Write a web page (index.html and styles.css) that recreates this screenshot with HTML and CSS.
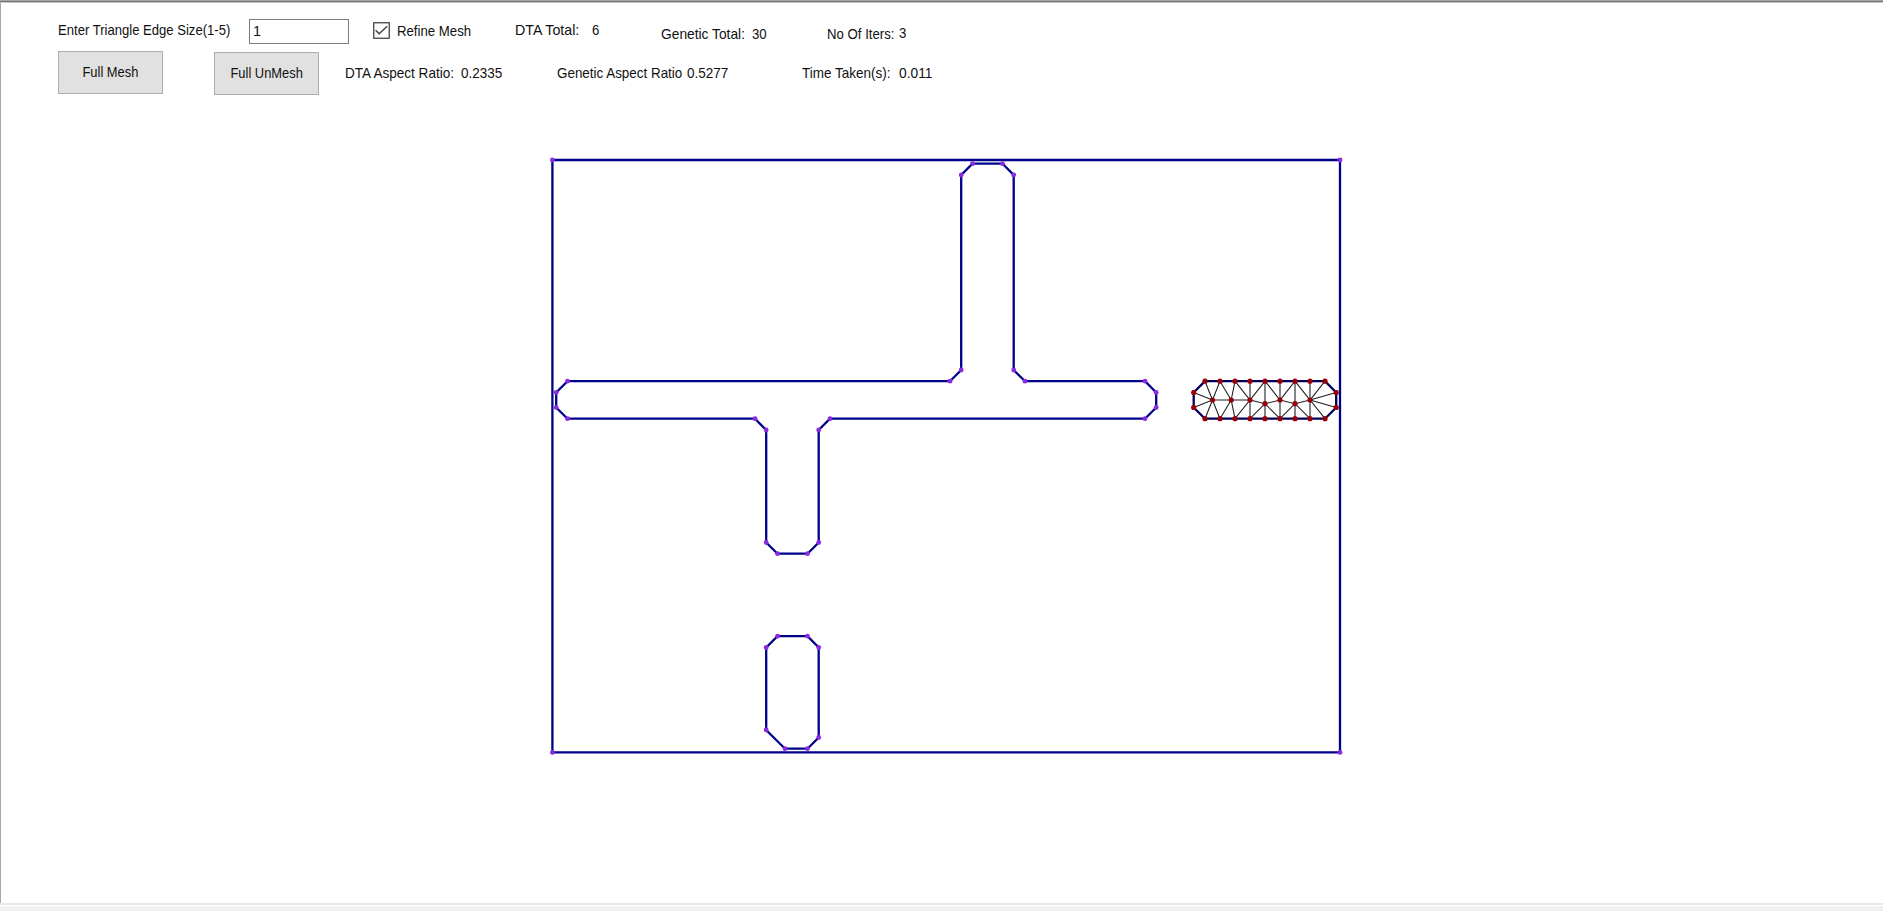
FILE: index.html
```html
<!DOCTYPE html>
<html lang="en">
<head>
<meta charset="utf-8">
<title>Mesh</title>
<link rel="stylesheet" href="styles.css">
</head>
<body>
<main class="panel">
  <form class="row row-top">
    <label class="text edge-label" for="edge"><span>Enter Triangle Edge Size(1-5)</span></label>
    <input class="edge-input" id="edge" type="text" value="1">
    <svg class="check" width="17" height="17" viewBox="0 0 17 17"><rect x=".75" y=".75" width="15.5" height="15.5" fill="#fff" stroke="#444" stroke-width="1.3"/><path d="M2.6 8.2 6.2 11.8 14.2 4.2" fill="none" stroke="#444" stroke-width="1.5"/></svg>
    <span class="text refine"><span>Refine Mesh</span></span>
    <span class="text dta-total"><span>DTA Total:</span></span>
    <span class="text dta-total-value"><span>6</span></span>
    <span class="text genetic-total"><span>Genetic Total:</span></span>
    <span class="text genetic-total-value"><span>30</span></span>
    <span class="text iters"><span>No Of Iters:</span></span>
    <span class="text iters-value"><span>3</span></span>
  </form>
  <div class="row row-bottom">
    <button class="button mesh" type="button"><span>Full Mesh</span></button>
    <button class="button unmesh" type="button"><span>Full UnMesh</span></button>
    <span class="text dta-ratio"><span>DTA Aspect Ratio:</span></span>
    <span class="text dta-ratio-value"><span>0.2335</span></span>
    <span class="text genetic-ratio"><span>Genetic Aspect Ratio</span></span>
    <span class="text genetic-ratio-value"><span>0.5277</span></span>
    <span class="text time"><span>Time Taken(s):</span></span>
    <span class="text time-value"><span>0.011</span></span>
  </div>
  <svg class="drawing" width="800" height="605" viewBox="546 154 800 605">
    <defs>
      <marker id="node" viewBox="-3 -3 6 6" markerWidth="6" markerHeight="6" markerUnits="userSpaceOnUse"><circle r="2.4" fill="#8a2be2"/></marker>
      <marker id="mesh-node" viewBox="-3 -3 6 6" markerWidth="6" markerHeight="6" markerUnits="userSpaceOnUse"><circle r="2.6" fill="#960008"/></marker>
    </defs>
    <g class="outline">
      <path d="M552.4 160H1340V752.4H552.4Z"/>
      <path d="M567.5 381.2 556.2 392.5V407.5L567.5 418.7H755L766.2 430V542.5L777.5 553.7H807.5L818.7 542.5V430L830 418.7H1145L1156.2 407.5V392.5L1145 381.2H1025L1013.7 370V175L1002.5 163.7H972.5L961.2 175V370L950 381.2Z"/>
      <path d="M777.5 636.2H807.5L818.7 647.5V737.5L807.5 748.7H785L766.2 730V647.5Z"/>
    </g>
    <path class="mesh-lines" d="M1193.7 392.5 1212.5 400 1193.7 407.5M1205 381.2 1212.5 400 1220 381.2M1205 418.7 1212.5 400 1220 418.7M1212.5 400H1250M1220 381.2 1231.2 400 1235 381.2M1220 418.7 1231.2 400 1235 418.7M1235 381.2 1250 400 1265 381.2M1235 418.7 1250 400M1250 381.2V418.7M1250 400 1265 403.7 1280 400 1295 403.7 1310 400M1265 381.2V418.7M1250 418.7 1265 403.7 1280 418.7M1265 381.2 1280 400 1295 381.2M1280 381.2V418.7M1295 381.2V418.7M1280 418.7 1295 403.7 1310 418.7M1295 381.2 1310 400 1325 381.2M1310 381.2V418.7M1336.2 392.5 1310 400 1336.2 407.5M1310 400 1325 418.7"/>
    <path class="mesh-border" d="M1205 381.2H1220 1235 1250 1265 1280 1295 1310 1325L1336.2 392.5V407.5L1325 418.7H1310 1295 1280 1265 1250 1235 1220 1205L1193.7 407.5V392.5Z"/>
    <path class="mesh-inner" d="M1212.5 400 1231.2 400 1250 400 1265 403.7 1280 400 1295 403.7 1310 400"/>
  </svg>
</main>
</body>
</html>
```
FILE: styles.css
```css
* { box-sizing: border-box; }
html, body { height: 100%; }
body {
  margin: 0;
  background: #f0f0f0;
  color: #111;
  font: 14.5px/20px "Liberation Sans", Arial, sans-serif;
  overflow: hidden;
}
.panel {
  display: flex;
  flex-direction: column;
  height: 906px;
  padding: 2px 0 0 1px;
  border-bottom: 1px solid #fff;
  background:
    linear-gradient(#a6a6a6 1px, #747474 1px 2px, #c8c8c8 2px) 0 0 / 100% 3px no-repeat,
    linear-gradient(#e8e8e8, #e8e8e8) 0 903px / 100% 2px no-repeat,
    linear-gradient(#a8a8a8, #a8a8a8) 0 0 / 1px 903px no-repeat,
    #fff;
}
.row { display: flex; align-items: flex-start; flex: none; }
.row-top { height: 48px; padding: 17px 0 0 57px; }
.row-bottom { height: 50px; padding: 1px 0 0 57px; }
.text { flex: none; height: 20px; white-space: nowrap; }
.text > span, .button > span {
  display: inline-block;
  transform: scaleX(var(--fit, .91));
  transform-origin: 0 50%;
}
.edge-label { --fit: .902; width: 191px; margin-top: 1px; }
.edge-input {
  flex: none;
  width: 100px;
  height: 25px;
  padding: 0 3px 2px;
  border: 1px solid #7a7a7a;
  background: #fff;
  color: #111;
  font: inherit;
}
.check { flex: none; margin: 3px 0 0 24px; }
.refine { width: 118px; margin: 2px 0 0 7px; }
.dta-total { --fit: .98; width: 77px; margin-top: 1px; }
.dta-total-value { width: 69px; margin-top: 1px; }
.genetic-total { --fit: .95; width: 91px; margin-top: 5px; }
.genetic-total-value { width: 75px; margin-top: 5px; }
.iters { width: 72px; margin-top: 5px; }
.iters-value { margin-top: 4px; }
.button {
  flex: none;
  width: 105px;
  height: 43px;
  padding: 0 0 1px;
  border: 1px solid #adadad;
  background: #e1e1e1;
  color: #111;
  font: inherit;
  white-space: nowrap;
}
.button > span { transform-origin: 50% 50%; }
.mesh { --fit: .89; }
.unmesh { --fit: .89; margin: 1px 26px 0 51px; }
.row-bottom .text { margin-top: 12px; }
.dta-ratio { --fit: .935; width: 116px; }
.dta-ratio-value { --fit: .93; width: 96px; }
.genetic-ratio { --fit: .925; width: 130px; }
.genetic-ratio-value { --fit: .93; width: 115px; }
.time { --fit: .93; width: 97px; }
.time-value { --fit: .95; }
.drawing { flex: none; margin: 54px 0 0 545px; }
.outline path {
  fill: none;
  stroke: #00008b;
  stroke-width: 2.3;
  marker-start: url(#node);
  marker-mid: url(#node);
}
.mesh-border {
  fill: none;
  stroke: #00005a;
  stroke-width: 2.3;
  marker-start: url(#mesh-node);
  marker-mid: url(#mesh-node);
}
.mesh-lines { fill: none; stroke: #222; stroke-width: 1.1; }
.mesh-inner {
  fill: none;
  marker-start: url(#mesh-node);
  marker-mid: url(#mesh-node);
  marker-end: url(#mesh-node);
}
```
